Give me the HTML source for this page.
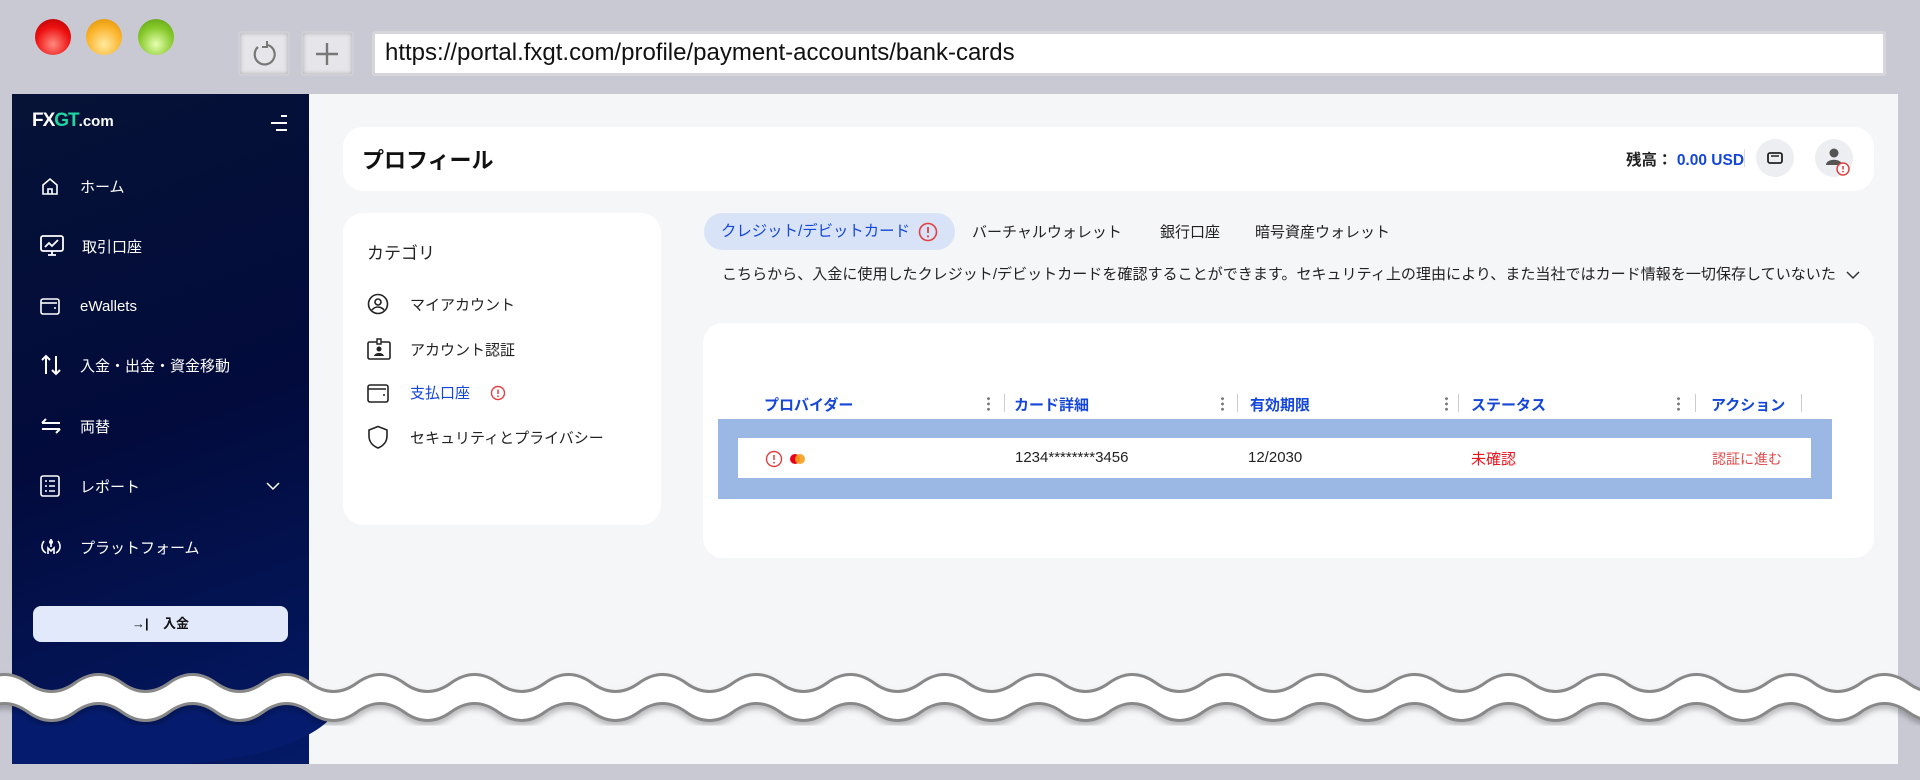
<!DOCTYPE html>
<html><head><meta charset="utf-8">
<style>
*{margin:0;padding:0;box-sizing:border-box}
body{width:1920px;height:780px;overflow:hidden;background:#c9c9d4;font-family:"Liberation Sans","Noto Sans CJK JP",sans-serif;position:relative}
.abs{position:absolute}
.light{position:absolute;top:19px;width:36px;height:36px;border-radius:50%}
.btn{position:absolute;top:31px;height:45px;background:#e6e6ea;border:2px solid #cfcfd6;border-radius:3px;box-shadow:inset 0 0 4px #aaa}
.url{position:absolute;left:372px;top:31px;width:1514px;height:45px;background:#fff;border:3px solid #d5d5da;border-radius:3px;font-size:24px;color:#111;padding:5px 0 0 10px}
.content{position:absolute;left:12px;top:94px;width:1886px;height:670px;background:#f5f6f8;overflow:hidden}
.side{position:absolute;left:0;top:0;width:297px;height:670px;background:linear-gradient(160deg,#061236 0%,#020b3c 50%,#041a66 100%)}
.mi{position:absolute;left:0;color:#fff;font-size:15px;display:flex;align-items:center}
.mi svg{position:absolute;left:28px}
.mi span{position:absolute;left:68px;white-space:nowrap}
.card{position:absolute;background:#fff;border-radius:20px}
.cat{position:absolute;left:24px;font-size:15px;color:#222;display:flex;align-items:center}
.th{position:absolute;font-size:15px;font-weight:bold;color:#1446d8}
.dots{position:absolute;width:3px;height:16px;background:radial-gradient(circle,#777 1.3px,transparent 1.6px) 0 0/3px 5.3px}
.sep{position:absolute;width:1px;height:18px;background:#ccc}
</style></head><body>
<div class="light" style="left:35px;background:radial-gradient(circle at 50% 70%,#ff8a80,#e11 55%,#a00)"></div>
<div class="light" style="left:86px;background:radial-gradient(circle at 50% 70%,#ffe9a0,#fbb42c 55%,#d88a00)"></div>
<div class="light" style="left:138px;background:radial-gradient(circle at 50% 70%,#e6ffb0,#86c92a 55%,#5a9a10)"></div>
<div class="btn" style="left:238px;width:52px"><svg width="48" height="41" viewBox="0 0 48 41"><path d="M28 12a10 10 0 1 1-10 2" fill="none" stroke="#777" stroke-width="2.2"/><path d="M27 8v6h-5" fill="none" stroke="#777" stroke-width="2"/></svg></div>
<div class="btn" style="left:301px;width:53px"><svg width="49" height="41" viewBox="0 0 49 41"><path d="M24 10v22M13 21h22" stroke="#777" stroke-width="2.4"/></svg></div>
<div class="url">https://portal.fxgt.com/profile/payment-accounts/bank-cards</div>

<div class="content">
 <div class="side">
  <div class="abs" style="left:20px;top:16px;color:#fff;font-weight:bold;font-size:19px;letter-spacing:-1px">FX<span style="color:#1fd6a0">GT</span><span style="font-size:15px;letter-spacing:0">.com</span></div>
  <svg class="abs" style="left:256px;top:20px" width="22" height="18"><path d="M13 2h6M3 9h16M8 16h11" stroke="#fff" stroke-width="2"/></svg>
  <div class="mi" style="top:92px"><svg width="20" height="20" viewBox="0 0 20 20"><path d="M3 9l7-6 7 6v9H3z M8 18v-5h4v5" fill="none" stroke="#fff" stroke-width="1.6"/></svg><span>ホーム</span></div>
  <div class="mi" style="top:152px"><svg width="24" height="22" viewBox="0 0 24 22"><rect x="1" y="1" width="22" height="15" rx="2" fill="none" stroke="#fff" stroke-width="1.8"/><path d="M5 12l4-4 3 3 6-6M8 20h8M12 16v4" fill="none" stroke="#fff" stroke-width="1.8"/></svg><span style="left:70px">取引口座</span></div>
  <div class="mi" style="top:212px"><svg width="20" height="18" viewBox="0 0 20 18"><rect x="1" y="2" width="18" height="15" rx="2" fill="none" stroke="#fff" stroke-width="1.6"/><path d="M1 6h16" stroke="#fff" stroke-width="1.6"/><circle cx="15" cy="11" r="1" fill="#fff"/></svg><span>eWallets</span></div>
  <div class="mi" style="top:271px"><svg width="22" height="22" viewBox="0 0 22 22"><path d="M6 20V2M2 6l4-4 4 4M16 2v18M12 16l4 4 4-4" fill="none" stroke="#fff" stroke-width="2"/></svg><span>入金・出金・資金移動</span></div>
  <div class="mi" style="top:332px"><svg width="22" height="18" viewBox="0 0 22 18"><path d="M2 6h18M6 2L2 6M2 12h18M16 16l4-4" fill="none" stroke="#fff" stroke-width="2"/></svg><span>両替</span></div>
  <div class="mi" style="top:392px"><svg width="20" height="22" viewBox="0 0 20 22"><rect x="1" y="1" width="18" height="20" rx="2" fill="none" stroke="#fff" stroke-width="1.6"/><path d="M5 6h2M9 6h6M5 11h2M9 11h6M5 16h2M9 16h6" stroke="#fff" stroke-width="1.6"/></svg><span>レポート</span><svg style="left:254px" width="14" height="10"><path d="M1 2l6 6 6-6" fill="none" stroke="#fff" stroke-width="1.5"/></svg></div>
  <div class="mi" style="top:453px"><svg width="22" height="20" viewBox="0 0 22 20"><path d="M4 4c-3 4-3 9 2 12M18 4c3 4 3 9-2 12M8 17v-6l3 3 3-3v6M11 2v8" fill="none" stroke="#fff" stroke-width="1.6"/><circle cx="11" cy="5" r="2" fill="#fff"/></svg><span>プラットフォーム</span></div>
  <div class="abs" style="left:21px;top:512px;width:255px;height:36px;background:#e1e9fb;border-radius:8px;font-size:13px;font-weight:bold;color:#111;text-align:center;line-height:36px">→|&nbsp;&nbsp;&nbsp;&nbsp;入金</div>
 </div>
 <div class="abs" style="left:0;top:600px;width:330px;height:70px;background:#051c6e;border-bottom-right-radius:180px 70px"></div>

 <div class="card" style="left:331px;top:33px;width:1531px;height:64px">
  <div class="abs" style="left:19px;top:16px;font-size:22px;font-weight:bold;color:#111">プロフィール</div>
  <div class="abs" style="left:1283px;top:21px;font-size:15.5px;font-weight:bold;color:#222">残高： <span style="color:#1446d8">0.00 USD</span></div>
  <div class="abs" style="left:1401px;top:22px;width:1px;height:18px;background:#ddd"></div>
  <div class="abs" style="left:1413px;top:12px;width:38px;height:38px;border-radius:50%;background:#eceef2"><svg width="38" height="38"><rect x="12" y="14" width="14" height="10" rx="2" fill="none" stroke="#222" stroke-width="1.8"/><path d="M15 17h8" stroke="#222" stroke-width="1.5"/></svg></div>
  <div class="abs" style="left:1472px;top:12px;width:38px;height:38px;border-radius:50%;background:#eceef2"><svg width="38" height="38"><circle cx="19" cy="14" r="4.5" fill="#555"/><path d="M11 26c0-7 16-7 16 0z" fill="#555"/><circle cx="28" cy="30" r="6" fill="#fff" stroke="#e04040" stroke-width="1.5"/><path d="M28 27v3.5" stroke="#e04040" stroke-width="1.6"/><circle cx="28" cy="32.6" r=".9" fill="#e04040"/></svg></div>
 </div>

 <div class="card" style="left:331px;top:119px;width:318px;height:312px">
  <div class="abs" style="left:24px;top:26px;font-size:17px;color:#222">カテゴリ</div>
  <div class="cat" style="top:80px"><svg width="22" height="22" viewBox="0 0 22 22"><circle cx="11" cy="11" r="9.5" fill="none" stroke="#222" stroke-width="1.6"/><circle cx="11" cy="9" r="3" fill="none" stroke="#222" stroke-width="1.6"/><path d="M5 17c3-4 9-4 12 0" fill="none" stroke="#222" stroke-width="1.6"/></svg><span style="margin-left:21px">マイアカウント</span></div>
  <div class="cat" style="top:125px"><svg width="24" height="22" viewBox="0 0 24 22"><rect x="1" y="4" width="22" height="17" rx="1.5" fill="none" stroke="#222" stroke-width="1.6"/><path d="M10 1h4v5h-4z" fill="#fff" stroke="#222" stroke-width="1.4"/><circle cx="12" cy="11" r="2.5" fill="#222"/><path d="M7 18c1-4 9-4 10 0z" fill="#222"/></svg><span style="margin-left:19px">アカウント認証</span></div>
  <div class="cat" style="top:169px"><svg width="22" height="20" viewBox="0 0 22 20"><rect x="1" y="2" width="20" height="17" rx="2" fill="none" stroke="#222" stroke-width="1.6"/><path d="M1 6h18" stroke="#222" stroke-width="1.6"/><circle cx="17" cy="12" r="1" fill="#222"/></svg><span style="margin-left:21px;color:#1446d8">支払口座</span><svg style="margin-left:20px" width="16" height="16"><circle cx="8" cy="8" r="6.5" fill="none" stroke="#e04040" stroke-width="1.4"/><path d="M8 4.5v4.5" stroke="#e04040" stroke-width="1.5"/><circle cx="8" cy="11.2" r=".9" fill="#e04040"/></svg></div>
  <div class="cat" style="top:212px"><svg width="22" height="24" viewBox="0 0 22 24"><path d="M11 1.5l9 3.5v6c0 6-4 10-9 12-5-2-9-6-9-12V5z" fill="none" stroke="#222" stroke-width="1.6"/></svg><span style="margin-left:21px">セキュリティとプライバシー</span></div>
 </div>

 <div class="abs" style="left:692px;top:119px;width:251px;height:37px;border-radius:19px;background:#d9e3f7;color:#1446d8;font-size:15.4px;line-height:37px;padding-left:17px">クレジット/デビットカード<svg style="position:absolute;left:214px;top:9px" width="20" height="20"><circle cx="10" cy="10" r="8.5" fill="none" stroke="#e04040" stroke-width="1.6"/><path d="M10 5v6" stroke="#e04040" stroke-width="1.8"/><circle cx="10" cy="14.3" r="1.1" fill="#e04040"/></svg></div>
 <div class="abs" style="left:960px;top:127px;font-size:15px;color:#222">バーチャルウォレット</div>
 <div class="abs" style="left:1148px;top:127px;font-size:15px;color:#222">銀行口座</div>
 <div class="abs" style="left:1243px;top:127px;font-size:15px;color:#222">暗号資産ウォレット</div>
 <div class="abs" style="left:710px;top:169px;font-size:15.05px;color:#222;white-space:nowrap">こちらから、入金に使用したクレジット/デビットカードを確認することができます。セキュリティ上の理由により、また当社ではカード情報を一切保存していないた</div>
 <svg class="abs" style="left:1833px;top:176px" width="16" height="10"><path d="M2 2l6 6 6-6" fill="none" stroke="#333" stroke-width="1.5"/></svg>

 <div class="card" style="left:691px;top:229px;width:1171px;height:235px">
  <div class="th" style="left:61px;top:71px">プロバイダー</div>
  <div class="dots" style="left:284px;top:73px"></div><div class="sep" style="left:301px;top:71px"></div>
  <div class="th" style="left:311px;top:71px">カード詳細</div>
  <div class="dots" style="left:518px;top:73px"></div><div class="sep" style="left:534px;top:71px"></div>
  <div class="th" style="left:547px;top:71px">有効期限</div>
  <div class="dots" style="left:742px;top:73px"></div><div class="sep" style="left:755px;top:71px"></div>
  <div class="th" style="left:768px;top:71px">ステータス</div>
  <div class="dots" style="left:974px;top:73px"></div><div class="sep" style="left:992px;top:71px"></div>
  <div class="th" style="left:1008px;top:71px">アクション</div>
  <div class="sep" style="left:1098px;top:71px"></div>
  <div class="abs" style="left:15px;top:96px;width:1114px;height:80px;background:#9bb7e3"></div>
  <div class="abs" style="left:35px;top:115px;width:1073px;height:40px;background:#fff"></div>
  <svg class="abs" style="left:62px;top:127px" width="18" height="18"><circle cx="9" cy="9" r="7.5" fill="none" stroke="#e04040" stroke-width="1.4"/><path d="M9 5v5" stroke="#e04040" stroke-width="1.5"/><circle cx="9" cy="12.7" r=".9" fill="#e04040"/></svg>
  <svg class="abs" style="left:86px;top:130px" width="18" height="12"><circle cx="6" cy="6" r="5" fill="#eb001b"/><circle cx="11" cy="6" r="5" fill="#f79e1b" opacity=".9"/></svg>
  <div class="abs" style="left:312px;top:126px;font-size:15px;color:#222">1234********3456</div>
  <div class="abs" style="left:545px;top:126px;font-size:15px;color:#222">12/2030</div>
  <div class="abs" style="left:768px;top:125px;font-size:15px;color:#e8141e">未確認</div>
  <div class="abs" style="left:1009px;top:126px;font-size:14px;color:#e04a4a">認証に進む</div>
 </div>
</div>

<svg class="abs" style="left:0;top:660px" width="1920" height="80" viewBox="0 0 1920 80">
 <defs><filter id="sh"><feDropShadow dx="0" dy="4" stdDeviation="3" flood-color="#000" flood-opacity=".25"/></filter></defs>
 <g filter="url(#sh)" transform="translate(-19 0)">
 <path d="M-10 23 L0 23 Q23.5 6 47 23 T94 23 T141 23 T188 23 T235 23 T282 23 T329 23 T376 23 T423 23 T470 23 T517 23 T564 23 T611 23 T658 23 T705 23 T752 23 T799 23 T846 23 T893 23 T940 23 T987 23 T1034 23 T1081 23 T1128 23 T1175 23 T1222 23 T1269 23 T1316 23 T1363 23 T1410 23 T1457 23 T1504 23 T1551 23 T1598 23 T1645 23 T1692 23 T1739 23 T1786 23 T1833 23 T1880 23 T1927 23 T1974 23 T2021 23 L2021 52 Q1997.5 35 1974 52 T1927 52 T1880 52 T1833 52 T1786 52 T1739 52 T1692 52 T1645 52 T1598 52 T1551 52 T1504 52 T1457 52 T1410 52 T1363 52 T1316 52 T1269 52 T1222 52 T1175 52 T1128 52 T1081 52 T1034 52 T987 52 T940 52 T893 52 T846 52 T799 52 T752 52 T705 52 T658 52 T611 52 T564 52 T517 52 T470 52 T423 52 T376 52 T329 52 T282 52 T235 52 T188 52 T141 52 T94 52 T47 52 T0 52 L-10 52 Z" fill="#fff" stroke="#888" stroke-width="3"/>
 </g>
</svg>
</body></html>
